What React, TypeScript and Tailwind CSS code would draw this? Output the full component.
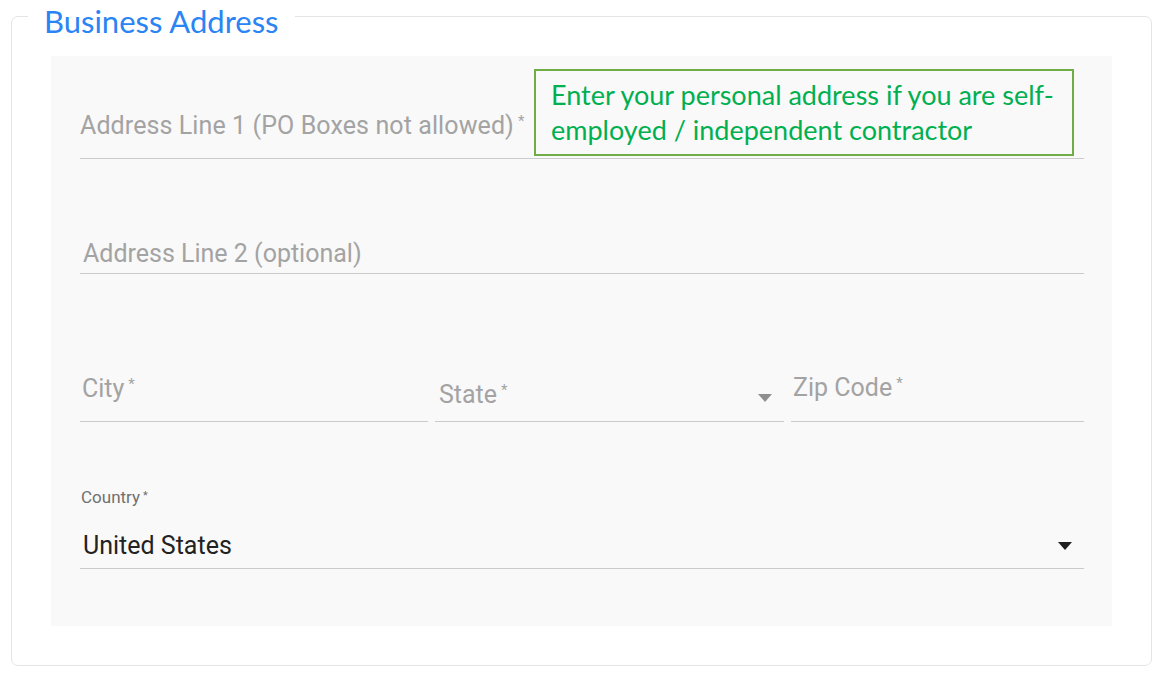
import React from "react";

const roboto = { fontFamily: "Roboto, 'Liberation Sans', sans-serif" };

function Arrow({ dark = false }: { dark?: boolean }) {
  return (
    <svg width="14" height="8" viewBox="0 0 14 8" className="shrink-0">
      <path d="M0 0 L14 0 L7 8 Z" fill={dark ? "#1f1f1f" : "#8f8f8f"} />
    </svg>
  );
}

function Star() {
  return <span className="relative -top-[8px] ml-[4px] text-[15px]">*</span>;
}

export default function App() {
  return (
    <div className="min-h-[685px] bg-white pl-[11px] pr-[14px]" style={roboto}>
      <fieldset className="rounded-[7px] border border-[#e4e4e4] pl-[39px] pr-[39px] pb-[39px]">
        <legend
          className="ml-[-23px] px-[16px] pt-[10px] text-[31px] leading-[22px] text-[#2a84f4]"
          style={{ fontFamily: "Lato, 'Open Sans', sans-serif" }}
        >
          Business Address
        </legend>

        <div className="mt-[24px] bg-[#f9f9f9] pl-[29px] pr-[28px] pb-[57px]">
          {/* Address line 1 + note */}
          <div className="relative flex h-[103px] items-end border-b border-[#cbcbcb] pb-[15px]">
            <span className="text-[25px] leading-[28px] tracking-[0.1px] text-[#a3a3a3]">
              Address Line 1 (PO Boxes not allowed)
              <Star />
            </span>
            <div
              className="absolute left-[454px] top-[13px] h-[87px] w-[540px] border-2 border-[#70ad47] bg-[#f9f9f9] pl-[15px] pt-[6px] text-[27px] leading-[35px] text-[#00b050]"
              style={{ fontFamily: "Lato, 'Open Sans', sans-serif" }}
            >
              Enter your personal address if you are self-
              <br />
              employed / independent contractor
            </div>
          </div>

          {/* Address line 2 */}
          <div className="flex h-[115px] items-end border-b border-[#cbcbcb] pb-[5px] pl-[3px]">
            <span className="text-[25px] leading-[28px] text-[#a3a3a3]">Address Line 2 (optional)</span>
          </div>

          {/* City / State / Zip */}
          <div className="grid grid-cols-[348px_349px_1fr] gap-[7px]">
            <div className="flex h-[148px] items-end border-b border-[#cbcbcb] pb-[15px] pl-[2px]">
              <span className="text-[25px] leading-[28px] text-[#a3a3a3]">
                City
                <Star />
              </span>
            </div>
            <div className="flex h-[148px] items-end justify-between border-b border-[#cbcbcb] pb-[9px] pl-[4px] pr-[12px]">
              <span className="text-[25px] leading-[28px] text-[#a3a3a3]">
                State
                <Star />
              </span>
              <div className="mb-[10px]">
                <Arrow />
              </div>
            </div>
            <div className="flex h-[148px] items-end border-b border-[#cbcbcb] pb-[16px] pl-[2px]">
              <span className="text-[25px] leading-[28px] text-[#a3a3a3]">
                Zip Code
                <Star />
              </span>
            </div>
          </div>

          {/* Country */}
          <div className="flex h-[147px] flex-col justify-end border-b border-[#cbcbcb] pb-[7px]">
            <span className="pl-[1px] text-[17px] leading-[20px] text-[#6f6f6f]">
              Country
              <span className="relative -top-[4px] ml-[3px] text-[11px]">*</span>
            </span>
            <div className="mt-[21px] flex items-center justify-between pl-[3px] pr-[12px]">
              <span className="text-[25px] leading-[30px] text-[#222222]">United States</span>
              <Arrow dark />
            </div>
          </div>
        </div>
      </fieldset>
    </div>
  );
}
